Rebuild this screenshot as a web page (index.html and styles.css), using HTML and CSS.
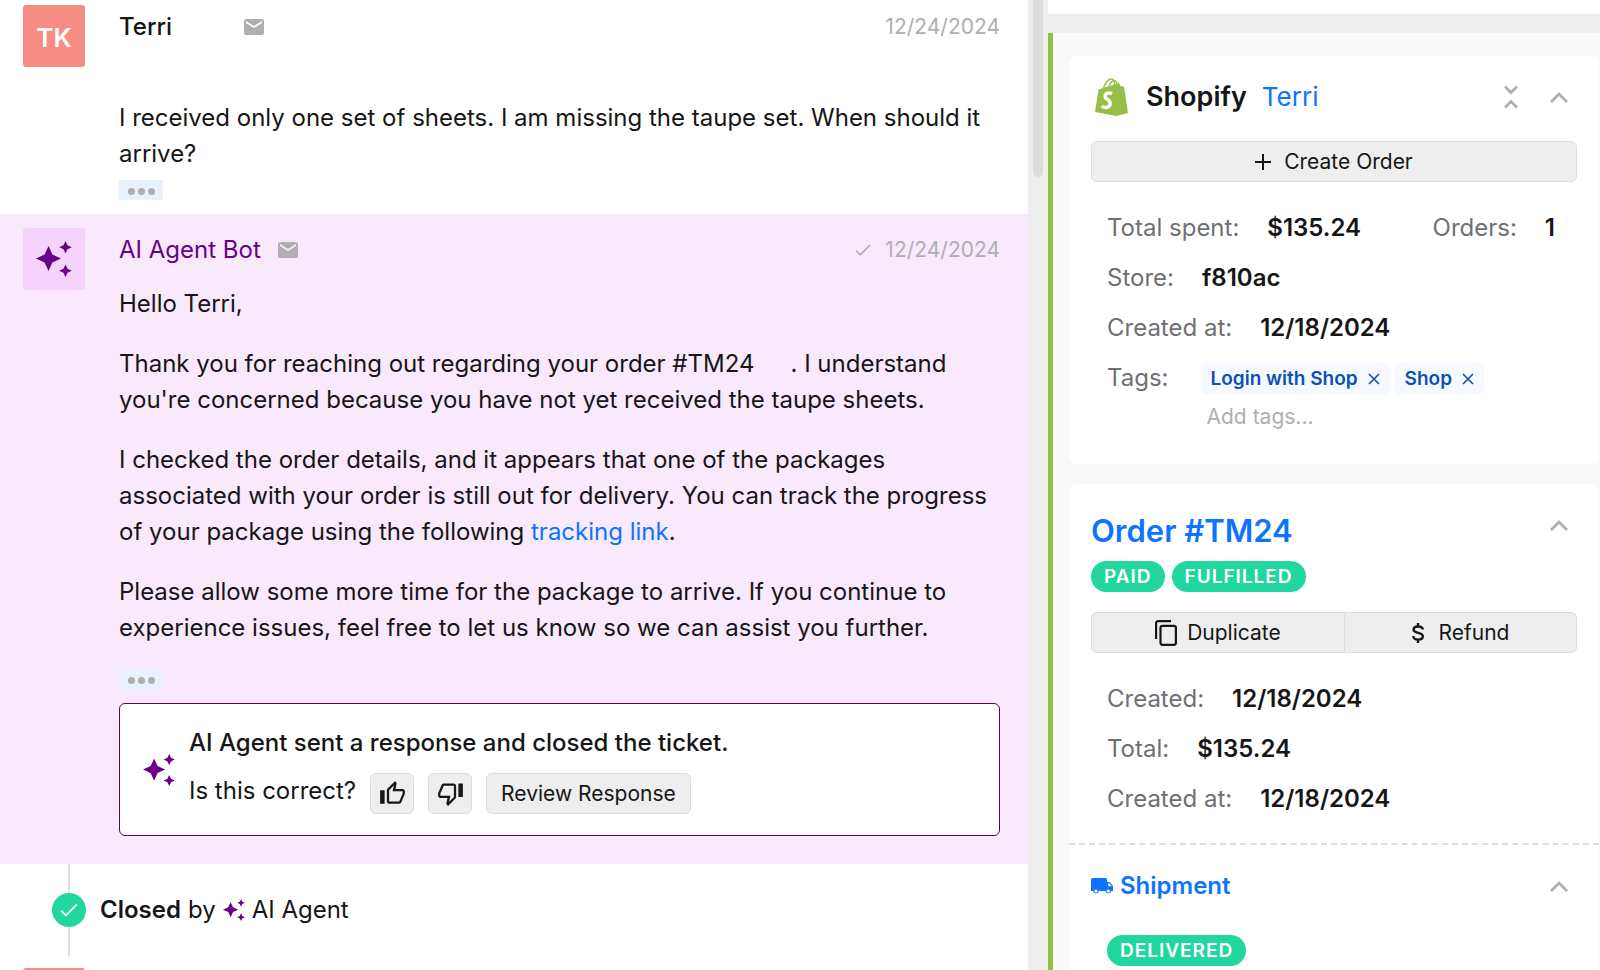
FILE: index.html
```
<!DOCTYPE html>
<html lang="en">
<head>
    <meta charset="UTF-8">
    <meta name="viewport" content="width=device-width, initial-scale=1.0">
    <title>Ticket - Terri</title>
    <link rel="stylesheet" href="styles.css">
</head>
<body>
    <!-- shared icons -->
    <svg class="sprite" aria-hidden="true">
        <symbol id="mail" viewBox="0 0 20 16">
            <path fill="currentColor" d="M2 0h16a2 2 0 0 1 2 2v12a2 2 0 0 1-2 2H2a2 2 0 0 1-2-2V2a2 2 0 0 1 2-2zm0 2v2l8 5 8-5V2l-8 5z"/>
        </symbol>
        <symbol id="sparkles" viewBox="0 0 36 36">
            <path fill="currentColor" d="M12.500 5l3.900 8.600 8.600 3.900-8.600 3.900-3.900 8.600-3.900-8.600L0 17.500l8.600-3.900zM29.500 0l2 4.300 4.300 2-4.300 2-2 4.300-2-4.300-4.300-2 4.300-2zM29.500 23.500l2 4.300 4.300 2-4.300 2-2 4.300-2-4.300-4.300-2 4.300-2z"/>
        </symbol>
        <symbol id="check" viewBox="0 0 16 12">
            <path fill="none" stroke="currentColor" stroke-width="1.600" d="M1 6.500l4.300 4.300L15 1"/>
        </symbol>
        <symbol id="chevron-up" viewBox="0 0 18 11">
            <path fill="none" stroke="currentColor" stroke-width="2.800" d="M1 10l8-8 8 8"/>
        </symbol>
        <symbol id="close" viewBox="0 0 12 12">
            <path fill="none" stroke="currentColor" stroke-width="1.600" d="M1 1l10 10M11 1L1 11"/>
        </symbol>
    </svg>

    <div class="layout">
        <main class="thread">
            <article class="message message-first">
                <div class="avatar avatar-user">TK</div>
                <div class="message-main">
                    <header class="message-header">
                        <span class="author author-customer">Terri</span>
                        <svg class="icon-mail"><use href="#mail"/></svg>
                        <time class="date">12/24/2024</time>
                    </header>
                    <div class="message-body customer-body">
                        <p>I received only one set of sheets. I am missing the taupe set. When should it arrive?</p>
                    </div>
                    <button class="more" aria-label="Show more"><i></i><i></i><i></i></button>
                </div>
            </article>

            <article class="message message-bot">
                <div class="avatar avatar-bot"><svg class="icon-avatar"><use href="#sparkles"/></svg></div>
                <div class="message-main">
                    <header class="message-header">
                        <span class="author author-bot">AI Agent Bot</span>
                        <svg class="icon-mail"><use href="#mail"/></svg>
                        <svg class="icon-sent"><use href="#check"/></svg>
                        <time class="date">12/24/2024</time>
                    </header>
                    <div class="message-body bot-body">
                        <p>Hello Terri,</p>
                        <p>Thank you for reaching out regarding your order #TM24<span class="redacted"></span>. I understand you're concerned because you have not yet received the taupe sheets.</p>
                        <p>I checked the order details, and it appears that one of the packages associated with your order is still out for delivery. You can track the progress of your package using the following <a href="#">tracking link</a>.</p>
                        <p>Please allow some more time for the package to arrive. If you continue to experience issues, feel free to let us know so we can assist you further.</p>
                    </div>
                    <button class="more" aria-label="Show more"><i></i><i></i><i></i></button>

                    <section class="feedback">
                        <svg class="icon-feedback"><use href="#sparkles"/></svg>
                        <div>
                            <h2 class="feedback-title">AI Agent sent a response and closed the ticket.</h2>
                            <div class="feedback-row">
                                <span class="feedback-question">Is this correct?</span>
                                <button class="btn btn-icon" aria-label="Yes">
                                    <svg viewBox="0 0 24 24"><path fill="currentColor" d="M9 21h9c.83 0 1.540-.5 1.840-1.220l3.020-7.050c.09-.23.14-.47.14-.73v-2c0-1.100-.9-2-2-2h-6.310l.95-4.570.03-.32c0-.41-.17-.79-.44-1.060L14.170 1 7.580 7.590C7.220 7.950 7 8.450 7 9v10c0 1.100.9 2 2 2zM9 9l4.340-4.340L12 10h9v2l-3 7H9V9zM1 9h4v12H1z"/></svg>
                                </button>
                                <button class="btn btn-icon" aria-label="No">
                                    <svg viewBox="0 0 24 24"><path fill="currentColor" d="M15 3H6c-.83 0-1.540.5-1.840 1.220l-3.020 7.050c-.09.23-.14.47-.14.73v2c0 1.100.9 2 2 2h6.310l-.95 4.570-.03.32c0 .41.17.79.44 1.060L9.830 23l6.590-6.590c.36-.36.58-.86.58-1.410V5c0-1.100-.9-2-2-2zm0 12l-4.340 4.340L12 14H3v-2l3-7h9v10zm4-12h4v12h-4z"/></svg>
                                </button>
                                <button class="btn btn-review">Review Response</button>
                            </div>
                        </div>
                    </section>
                </div>
            </article>

            <div class="event">
                <div class="event-rail"><span class="event-dot"><svg><use href="#check"/></svg></span></div>
                <p class="event-text"><strong>Closed</strong> by <svg class="icon-event"><use href="#sparkles"/></svg> AI Agent</p>
            </div>

            <article class="message message-next">
                <div class="avatar avatar-user"></div>
            </article>
        </main>

        <div class="scrollbar"><div class="thumb"></div></div>

        <aside class="sidebar">
            <div class="sidebar-top"></div>
            <div class="integration">
                <section class="card">
                    <header class="card-header">
                        <svg class="logo" viewBox="0 0 33 38">
                            <path fill="none" stroke="#95bf47" stroke-width="1.500" d="M8.500 11C9.500 5.500 13 1 16 1s4 3.500 4 9M14 10c0-4 2.500-7.500 5-7.500S22.500 6 23 9"/>
                            <path fill="#95bf47" d="M3.500 11.500L21 6l3-1 1.500 3 3.500.5L33 35l-11.500 3L0 34z"/>
                            <path fill="none" stroke="#fff" stroke-width="3.400" d="M17 15.800c-2.500-1.500-6.800-.9-7 2.300-.2 3.500 5.300 3.200 5.200 7.300-.1 4.300-5 5.200-8.600 2.800"/>
                        </svg>
                        <h2 class="card-title">Shopify</h2>
                        <a class="customer-link" href="#">Terri</a>
                        <button class="icon-btn collapse" aria-label="Collapse all">
                            <svg viewBox="0 0 14 24"><path fill="none" stroke="currentColor" stroke-width="2.800" d="M1 1.500l6 6 6-6M1 22.500l6-6 6 6"/></svg>
                        </button>
                        <button class="icon-btn" aria-label="Collapse"><svg class="icon-chevron"><use href="#chevron-up"/></svg></button>
                    </header>

                    <button class="btn btn-wide">
                        <svg class="icon-plus" viewBox="0 0 16 16"><path fill="none" stroke="currentColor" stroke-width="2" d="M8 0v16M0 8h16"/></svg>
                        Create Order
                    </button>

                    <dl class="fields">
                        <div class="field-pair">
                            <div class="field"><dt>Total spent:</dt><dd>$135.24</dd></div>
                            <div class="field"><dt>Orders:</dt><dd>1</dd></div>
                        </div>
                        <div class="field"><dt>Store:</dt><dd>f810ac</dd></div>
                        <div class="field"><dt>Created at:</dt><dd>12/18/2024</dd></div>
                        <div class="field field-tags">
                            <dt><label for="tags">Tags:</label></dt>
                            <dd class="tags">
                                <span class="tag">Login with Shop <button aria-label="Remove Login with Shop"><svg><use href="#close"/></svg></button></span>
                                <span class="tag">Shop <button aria-label="Remove Shop"><svg><use href="#close"/></svg></button></span>
                                <input id="tags" class="tag-input" type="text" placeholder="Add tags...">
                            </dd>
                        </div>
                    </dl>
                </section>

                <section class="card">
                    <header class="order-header">
                        <h2 class="order-title"><a href="#">Order #TM24</a></h2>
                        <button class="icon-btn" aria-label="Collapse"><svg class="icon-chevron"><use href="#chevron-up"/></svg></button>
                    </header>
                    <div class="badges">
                        <span class="badge">PAID</span>
                        <span class="badge">FULFILLED</span>
                    </div>
                    <div class="btn-group">
                        <button class="btn btn-duplicate">
                            <svg class="icon-copy" viewBox="0 0 22 26"><path fill="none" stroke="currentColor" stroke-width="2.200" d="M1.100 19V3.100a2 2 0 0 1 2-2H16M7.500 5.800h11.400a2 2 0 0 1 2 2v15a2 2 0 0 1-2 2H7.500a2 2 0 0 1-2-2v-15a2 2 0 0 1 2-2z"/></svg>
                            Duplicate
                        </button>
                        <button class="btn btn-refund">
                            <svg class="icon-dollar" viewBox="0 0 12 20"><path fill="none" stroke="currentColor" stroke-width="2.400" d="M6 0v3.500M6 16.500V20M11 6.500C10.500 4.500 8.500 3.500 6 3.500 3.200 3.500 1.600 4.900 1.600 6.700c0 4.200 9.200 2.200 9.200 6.600 0 2-1.800 3.300-4.600 3.300-3 0-4.800-1.400-5-3.600"/></svg>
                            Refund
                        </button>
                    </div>
                    <dl class="fields">
                        <div class="field"><dt>Created:</dt><dd>12/18/2024</dd></div>
                        <div class="field"><dt>Total:</dt><dd>$135.24</dd></div>
                        <div class="field"><dt>Created at:</dt><dd>12/18/2024</dd></div>
                    </dl>

                    <div class="shipment">
                        <header class="shipment-header">
                            <svg class="icon-truck" viewBox="0 0 22 16"><path fill="currentColor" d="M1.500 0h13A1.500 1.500 0 0 1 16 1.500V4h2.700L22 8.200V13h-1.800a3 3 0 0 1-5.900 0H7.900A3 3 0 0 1 2 13H0V1.500A1.500 1.500 0 0 1 1.500 0zM17.200 5.400v2.900h3.400l-2.300-2.900z"/><circle cx="5" cy="13" r="1.600" fill="#fff"/><circle cx="17.200" cy="13" r="1.600" fill="#fff"/></svg>
                            <h3 class="shipment-title"><a href="#">Shipment</a></h3>
                            <button class="icon-btn" aria-label="Collapse"><svg class="icon-chevron"><use href="#chevron-up"/></svg></button>
                        </header>
                        <div class="shipment-body"><span class="badge">DELIVERED</span></div>
                    </div>
                </section>
            </div>
        </aside>
    </div>
</body>
</html>
```

FILE: styles.css
```
* {
    box-sizing: border-box;
}
body {
    margin: 0;
    font-family: Inter, "Liberation Sans", sans-serif;
    font-size: 24px;
    line-height: 36px;
    color: #161616;
    background: white;
}
h2, h3, p, dl, dd {
    margin: 0;
}
a {
    color: #0d74ff;
    text-decoration: none;
}
button {
    font-family: inherit;
    color: inherit;
    padding: 0;
    border: none;
    background: none;
    cursor: pointer;
}
svg {
    display: block;
    flex: none;
}
.sprite {
    position: absolute;
    width: 0;
    height: 0;
}
.layout {
    display: grid;
    grid-template-columns: minmax(0, 1fr) 20px 552px;
    height: 100vh;
    overflow: hidden;
}

/* conversation */
.thread {
    overflow: hidden;
}
.message {
    display: flex;
    gap: 34px;
    padding: 14px 28px 14px 23px;
}
.message-first {
    padding-top: 5px;
}
.message-bot {
    background: #f8e9fd;
    padding-bottom: 28px;
}
.message-next {
    padding-top: 12px;
}
.message-main {
    flex: 1;
    min-width: 0;
}
.avatar {
    flex: none;
    display: flex;
    align-items: center;
    justify-content: center;
    width: 62px;
    height: 62px;
    border-radius: 3px;
    font-size: 26px;
    font-weight: 600;
    color: white;
}
.avatar-user {
    padding-top: 4px;
    background: #f58d84;
}
.avatar-bot {
    background: #f5d3fd;
    color: #6a0085;
}
.icon-avatar {
    width: 36px;
    height: 36px;
}
.message-header {
    display: flex;
    align-items: center;
    padding-top: 4px;
}
.author-customer {
    width: 125px;
    font-weight: 500;
}
.author-bot {
    margin-right: 17px;
    color: #6a0085;
}
.icon-mail {
    width: 20px;
    height: 16px;
    color: #afafaf;
}
.date {
    margin-left: auto;
    font-size: 21px;
    color: #afafaf;
}
.icon-sent {
    width: 16px;
    height: 12px;
    margin-left: auto;
    color: #afafaf;
}
.icon-sent + .date {
    margin-left: 14px;
}
.message-body p {
    margin-bottom: 24px;
}
.customer-body {
    padding-top: 55px;
}
.customer-body p:last-child {
    margin-bottom: 8px;
}
.bot-body {
    padding-top: 18px;
}
.bot-body p:last-child {
    margin-bottom: 23px;
}
.redacted {
    display: inline-block;
    width: 36px;
}
.more {
    display: flex;
    align-items: center;
    justify-content: center;
    gap: 3px;
    width: 44px;
    height: 20px;
    padding-top: 2px;
    background: #e9f1ff;
}
.more i {
    width: 7px;
    height: 7px;
    border-radius: 50%;
    background: #afafaf;
}
.feedback {
    display: flex;
    align-items: center;
    gap: 14px;
    margin-top: 14px;
    padding: 21px 23px;
    border: 1px solid #550070;
    border-radius: 6px;
    background: white;
}
.icon-feedback {
    width: 32px;
    height: 32px;
    color: #6a0085;
}
.feedback-title {
    margin-bottom: 12px;
    font-size: 24px;
    font-weight: 500;
}
.feedback-row {
    display: flex;
    align-items: flex-start;
    gap: 14px;
}
.btn {
    display: flex;
    align-items: center;
    justify-content: center;
    height: 41px;
    border: 1px solid #dcdcdc;
    border-radius: 6px;
    background: #eee;
    font-size: 21px;
    font-weight: 400;
}
.btn-icon {
    width: 44px;
}
.btn-icon svg {
    width: 27px;
    height: 27px;
}
.btn-review {
    padding: 0 14px;
}

/* closed event */
.event {
    display: flex;
    align-items: center;
    gap: 14px;
    height: 92px;
    padding-left: 52px;
}
.event-rail {
    display: flex;
    align-items: center;
    height: 100%;
    background: linear-gradient(#ddd, #ddd) center / 2px 100% no-repeat;
}
.event-dot {
    display: flex;
    align-items: center;
    justify-content: center;
    width: 34px;
    height: 34px;
    border-radius: 50%;
    background: #22d79f;
    color: white;
}
.event-dot svg {
    width: 18px;
    height: 14px;
}
.event-text {
    display: flex;
    align-items: center;
    gap: 7px;
}
.event-text strong {
    font-weight: 600;
}
.icon-event {
    width: 22px;
    height: 22px;
    color: #6a0085;
}

/* scrollbar */
.scrollbar {
    padding: 0 5px;
    background: #eee;
}
.thumb {
    height: 177px;
    border-radius: 0 0 5px 5px;
    background: #dcdcdc;
}

/* sidebar */
.sidebar {
    display: flex;
    flex-direction: column;
    overflow: hidden;
}
.sidebar-top {
    flex: none;
    height: 33px;
    border-bottom: 19px solid #eee;
    background: white;
}
.integration {
    flex: 1;
    padding: 23px 1px 0 16px;
    border-left: 5px solid #95bf40;
    background: #f9f9f9;
}
.card {
    margin-bottom: 20px;
    padding: 22px 22px 30px;
    border-radius: 8px;
    background: white;
}
.card-header {
    display: flex;
    align-items: center;
    height: 38px;
    margin-bottom: 25px;
    padding-right: 9px;
    padding-left: 4px;
}
.logo {
    width: 33px;
    height: 38px;
    margin-right: 18px;
}
.card-title {
    margin-right: 15px;
    font-size: 27px;
    font-weight: 600;
}
.customer-link {
    font-size: 26px;
}
.icon-btn {
    margin-left: auto;
    color: #afafaf;
}
.collapse svg {
    width: 14px;
    height: 24px;
}
.collapse + .icon-btn {
    margin-left: 32px;
}
.icon-chevron {
    width: 18px;
    height: 11px;
}
.btn-wide {
    width: 100%;
    gap: 13px;
}
.icon-plus {
    width: 16px;
    height: 16px;
}
.fields {
    display: flex;
    flex-direction: column;
    gap: 14px;
    padding: 28px 16px 0;
}
.field-pair {
    display: flex;
    justify-content: space-between;
    padding-right: 6px;
}
.field {
    display: flex;
    gap: 28px;
}
.field dt {
    color: #6e7072;
}
.field dd {
    font-weight: 600;
}
.field-tags {
    gap: 32px;
}
.field .tags {
    display: flex;
    flex-wrap: wrap;
    gap: 3px 5px;
    padding-top: 3px;
    font-weight: 600;
}
.tag {
    display: flex;
    align-items: center;
    gap: 10px;
    height: 32px;
    padding: 0 10px;
    border-radius: 6px;
    background: #f6f9ff;
    color: #0b51b4;
    font-size: 19px;
}
.tag svg {
    width: 12px;
    height: 12px;
}
.tag-input {
    width: 100%;
    height: 36px;
    padding: 0 6px;
    border: none;
    outline: none;
    background: none;
    font-family: inherit;
    font-size: 21px;
}
.tag-input::placeholder {
    color: #afafaf;
}

/* order */
.order-header {
    display: flex;
    align-items: flex-start;
    padding: 7px 9px 0 0;
}
.order-header .icon-btn {
    padding-top: 7px;
}
.order-title {
    font-size: 31px;
    font-weight: 600;
}
.badges {
    display: flex;
    gap: 7px;
    margin: 12px 0 20px;
}
.badge {
    display: inline-block;
    height: 31px;
    padding: 0 13px;
    border-radius: 16px;
    background: #22d79f;
    color: white;
    font-size: 19px;
    font-weight: 600;
    line-height: 31px;
    letter-spacing: 1px;
}
.btn-group {
    display: flex;
}
.btn-duplicate {
    flex: 254;
    gap: 10px;
    border-radius: 6px 0 0 6px;
}
.btn-refund {
    flex: 233;
    gap: 15px;
    border-left: none;
    border-radius: 0 6px 6px 0;
}
.icon-copy {
    width: 22px;
    height: 26px;
}
.icon-dollar {
    width: 12px;
    height: 20px;
}
.shipment {
    margin: 26px -22px 0;
    padding: 23px 22px 0;
    border-top: 2px dashed #ddd;
}
.shipment-header {
    display: flex;
    align-items: center;
    gap: 7px;
    padding-right: 9px;
}
.icon-truck {
    width: 22px;
    height: 16px;
    color: #0d74ff;
}
.shipment-title {
    font-size: 24px;
    font-weight: 600;
}
.shipment-body {
    padding: 27px 16px 0;
}
```
